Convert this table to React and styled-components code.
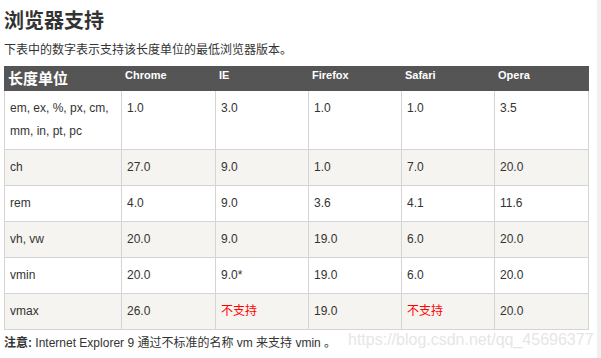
import React from "react";
import styled, { createGlobalStyle } from "styled-components";

const GlobalStyle = createGlobalStyle`
  html, body {
    margin: 0;
    padding: 0;
    background: #fff;
  }
  body {
    font-family: "Liberation Sans", Arial, "Noto Sans CJK SC", sans-serif;
    color: #333;
  }
`;

const Page = styled.div`
  position: relative;
  display: flex;
  width: 601px;
  height: 358px;
  overflow: hidden;
`;

const Main = styled.div`
  flex: 1;
  padding-left: 4px;
`;

const ScrollEdge = styled.div`
  width: 4px;
  background: #f0f0f0;
`;

const Title = styled.h2`
  margin: 0;
  padding-top: 7px;
  font-size: 20px;
  line-height: 28px;
  font-weight: bold;
  color: #333;
`;

const Intro = styled.p`
  margin: 6px 0 0;
  font-size: 12px;
  line-height: 18px;
`;

const Table = styled.table`
  margin-top: 7px;
  width: 584px;
  table-layout: fixed;
  border-collapse: collapse;
  font-size: 12px;
`;

const Th = styled.th`
  background: #555;
  color: #fff;
  border: 1px solid #555;
  text-align: left;
  vertical-align: top;
  padding: 1px 3px 0;
  font-size: ${(p) => (p.$big ? "15px" : "11px")};
  line-height: ${(p) => (p.$big ? "22px" : "14px")};
  font-weight: bold;
`;

const Row = styled.tr`
  background: ${(p) => (p.$shade ? "#f6f4f0" : "#fff")};
`;

const Td = styled.td`
  border: 1px solid #d4d4d4;
  padding: 6px 5px;
  line-height: 23px;
  vertical-align: top;
  color: ${(p) => (p.$none ? "#f00" : "#333")};
`;

const Note = styled.p`
  margin: 4px 0 0;
  font-size: 12px;
  line-height: 18px;
  b {
    font-weight: bold;
  }
`;

const Watermark = styled.div`
  position: absolute;
  left: 348px;
  top: 330px;
  font-size: 16px;
  line-height: 20px;
  color: #e6e6e6;
  white-space: nowrap;
  pointer-events: none;
`;

const widths = [117, 94, 93, 93, 93, 94];
const browsers = ["Chrome", "IE", "Firefox", "Safari", "Opera"];
const NONE = "不支持";

const rows = [
  ["em, ex, %, px, cm, mm, in, pt, pc", "1.0", "3.0", "1.0", "1.0", "3.5"],
  ["ch", "27.0", "9.0", "1.0", "7.0", "20.0"],
  ["rem", "4.0", "9.0", "3.6", "4.1", "11.6"],
  ["vh, vw", "20.0", "9.0", "19.0", "6.0", "20.0"],
  ["vmin", "20.0", "9.0*", "19.0", "6.0", "20.0"],
  ["vmax", "26.0", NONE, "19.0", NONE, "20.0"],
];

export default function App() {
  return (
    <>
      <GlobalStyle />
      <Page>
        <Main>
          <Title>浏览器支持</Title>
          <Intro>下表中的数字表示支持该长度单位的最低浏览器版本。</Intro>
          <Table>
            <colgroup>
              {widths.map((w, i) => (
                <col key={i} style={{ width: w }} />
              ))}
            </colgroup>
            <thead>
              <tr>
                <Th $big>长度单位</Th>
                {browsers.map((b) => (
                  <Th key={b}>{b}</Th>
                ))}
              </tr>
            </thead>
            <tbody>
              {rows.map((r, i) => (
                <Row key={r[0]} $shade={i % 2 === 1}>
                  {r.map((c, j) => (
                    <Td key={j} $none={c === NONE}>
                      {c}
                    </Td>
                  ))}
                </Row>
              ))}
            </tbody>
          </Table>
          <Note>
            <b>注意:</b> Internet Explorer 9 通过不标准的名称 vm 来支持 vmin 。
          </Note>
        </Main>
        <ScrollEdge />
        <Watermark>https://blog.csdn.net/qq_45696377</Watermark>
      </Page>
    </>
  );
}
